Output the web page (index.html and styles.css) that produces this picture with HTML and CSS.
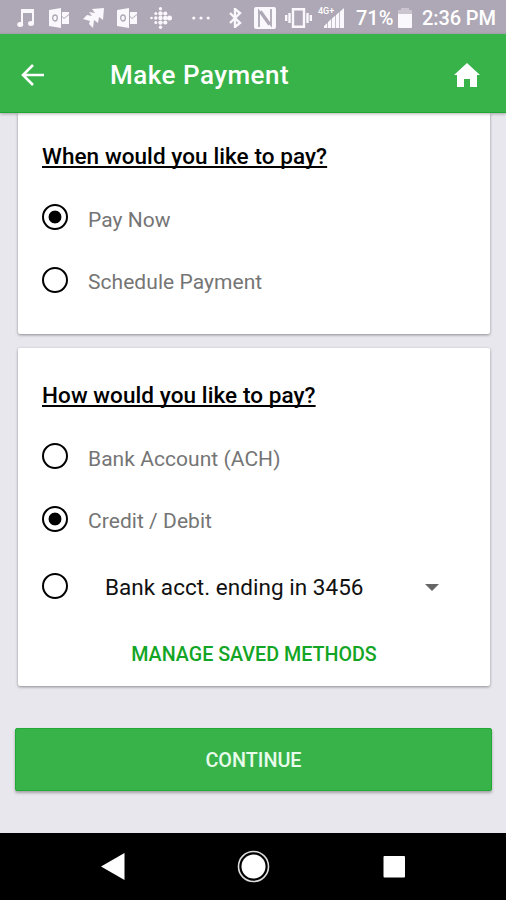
FILE: index.html
```html
<!DOCTYPE html>
<html lang="en">
<head>
  <meta charset="UTF-8">
  <title>Make Payment</title>
  <link rel="stylesheet" href="styles.css">
</head>
<body>
  <div class="status">
    <svg class="music" width="18" height="20" viewBox="0 0 18 20">
      <path d="M4 1h13v14h-2V5H6v12H4z"/>
      <ellipse cx="3.2" cy="16.5" rx="3" ry="2.5"/>
      <ellipse cx="14" cy="15.5" rx="3" ry="2.5"/>
    </svg>
    <svg class="mail" width="21" height="20" viewBox="0 0 21 20">
      <path d="M0 2l12-2v20L0 18z"/>
      <ellipse class="letter" cx="6" cy="10" rx="2.300" ry="3"/>
      <path d="M13 4h7v2l-5 4-2-2zM13 9l2 2 5-4v9h-7z"/>
    </svg>
    <svg class="send" width="21" height="20" viewBox="0 0 21 20">
      <path d="M9 1l12-1-1 12-4-3-1 6-4-3-1 8-4-4 1-3-7-2 4-4 5 1-3-4 6 1z"/>
    </svg>
    <svg class="mail" width="21" height="20" viewBox="0 0 21 20">
      <path d="M0 2l12-2v20L0 18z"/>
      <ellipse class="letter" cx="6" cy="10" rx="2.300" ry="3"/>
      <path d="M13 4h7v2l-5 4-2-2zM13 9l2 2 5-4v9h-7z"/>
    </svg>
    <svg class="fit" width="22" height="22" viewBox="0 0 22 22">
      <circle cx="1.500" cy="11" r="1.300"/>
      <circle cx="5.800" cy="6.500" r="1.500"/><circle cx="5.800" cy="11" r="1.800"/><circle cx="5.800" cy="15.500" r="1.500"/>
      <circle cx="10.500" cy="1.800" r="1.700"/><circle cx="10.500" cy="6.400" r="2.200"/><circle cx="10.500" cy="11" r="2.200"/><circle cx="10.500" cy="15.600" r="2.200"/><circle cx="10.500" cy="20.200" r="1.700"/>
      <circle cx="15.300" cy="6.500" r="2.100"/><circle cx="15.300" cy="11" r="2.300"/><circle cx="15.300" cy="15.500" r="2.100"/>
      <circle cx="19.500" cy="11" r="2.500"/>
    </svg>
    <svg class="dots" width="18" height="4" viewBox="0 0 18 4">
      <circle cx="1.800" cy="2" r="1.600"/><circle cx="9" cy="2" r="1.600"/><circle cx="16.200" cy="2" r="1.600"/>
    </svg>
    <svg class="bluetooth" width="13" height="20" viewBox="0 0 13 20">
      <path class="line" d="M1 5l10 10-5 4V1l5 4L1 15"/>
    </svg>
    <svg class="nfc" width="22" height="22" viewBox="0 0 22 22">
      <rect width="22" height="22" rx="2"/>
      <path class="cut" d="M5 20V4l10 14M17 2v16L7 4"/>
    </svg>
    <svg class="vibrate" width="27" height="20" viewBox="0 0 27 20">
      <path class="line" d="M8 1.200h11v17.600H8z"/>
      <path class="line" d="M4.500 5v10M22.500 5v10M1.200 7v6M25.800 7v6"/>
    </svg>
    <div class="signal">
      <span>4G+</span>
      <svg width="20" height="20" viewBox="0 0 20 20">
        <path d="M0 20v-2l3.300-3v5zM4 20v-6l3.300-3v9zM8 20v-9.500l3.300-3V20zM12 20V7l3.300-3v16zM16 20V3.500L20 0v20z"/>
      </svg>
    </div>
    <span class="percent">71%</span>
    <svg class="battery" width="14" height="20" viewBox="0 0 14 20">
      <path class="used" d="M0 7V3q0-1 1-1h2V0h8v2h2q1 0 1 1v4z"/>
      <path d="M0 6h14v13q0 1-1 1H1q-1 0-1-1z"/>
    </svg>
    <span class="time">2:36 PM</span>
  </div>
  <div class="header">
    <svg class="back" width="24" height="24" viewBox="0 0 24 24">
      <path d="M12 2L2 12l10 10M2 12h21"/>
    </svg>
    <h1>Make Payment</h1>
    <svg class="home" width="26" height="24" viewBox="0 0 26 24">
      <path d="M13 0l13 12h-3v12h-7v-8h-6v8H3V12H0z"/>
    </svg>
  </div>
  <div class="content">
    <div class="card when">
      <h2>When would you like to pay?</h2>
      <div class="option"><span class="radio on"></span><span class="label">Pay Now</span></div>
      <div class="option"><span class="radio"></span><span class="label">Schedule Payment</span></div>
    </div>
    <div class="card how">
      <h2>How would you like to pay?</h2>
      <div class="option"><span class="radio"></span><span class="label">Bank Account (ACH)</span></div>
      <div class="option"><span class="radio on"></span><span class="label">Credit / Debit</span></div>
      <div class="option saved">
        <span class="radio"></span>
        <span class="select">Bank acct. ending in 3456</span>
        <span class="caret"></span>
      </div>
      <div class="manage">MANAGE SAVED METHODS</div>
    </div>
    <div class="continue">CONTINUE</div>
  </div>
  <div class="nav">
    <svg width="506" height="67" viewBox="0 0 506 67">
      <path d="M101 33.500L124.500 20v27z"/>
      <circle class="ring" cx="253.500" cy="33.500" r="15"/>
      <circle cx="253.500" cy="33.500" r="12"/>
      <rect x="383.500" y="23" width="21.500" height="21.500" rx="1"/>
    </svg>
  </div>
</body>
</html>
```
FILE: styles.css
```css
* {
  padding: 0;
  margin: 0;
  box-sizing: border-box;
}
body {
  width: 506px;
  height: 900px;
  overflow: hidden;
  display: flex;
  flex-direction: column;
  background: #e8e7ee;
  font-family: Roboto, "Liberation Sans", sans-serif;
}
svg {
  display: block;
  flex: none;
  fill: #fff;
}
.status {
  height: 34px;
  flex: none;
  display: flex;
  align-items: center;
  padding-top: 1px;
  padding-left: 17px;
  background: #aea7b5;
  color: #fff;
  font-size: 20px;
  font-weight: 500;
  white-space: nowrap;
}
.status svg {
  fill: #faf8fc;
}
.status .line {
  fill: none;
  stroke: #faf8fc;
  stroke-width: 2.4;
}
.status .cut {
  fill: none;
  stroke: #aea7b5;
  stroke-width: 1.8;
}
.status .letter {
  fill: none;
  stroke: #aea7b5;
  stroke-width: 1.3;
}
.mail {
  margin-left: 14px;
}
.send {
  margin-left: 13px;
}
.send + .mail {
  margin-left: 13px;
}
.fit {
  margin-left: 12px;
}
.dots {
  margin-left: 20px;
}
.bluetooth {
  margin-left: 19px;
}
.nfc {
  margin-left: 12px;
}
.vibrate {
  margin-left: 9px;
}
.signal {
  width: 26px;
  height: 21px;
  margin-left: 6px;
  display: grid;
}
.signal span {
  grid-area: 1 / 1;
  font-size: 9px;
  line-height: 8px;
}
.signal svg {
  grid-area: 1 / 1;
  align-self: end;
  justify-self: end;
}
.percent {
  width: 42px;
  margin-left: 12px;
  line-height: 33px;
  padding-top: 2px;
}
.battery .used {
  fill: #cbc5d0;
}
.time {
  margin-left: 10px;
  line-height: 33px;
  padding-top: 2px;
  letter-spacing: -0.1px;
}
.header {
  height: 79px;
  flex: none;
  display: flex;
  align-items: center;
  padding: 4px 26px 0 21px;
  background: #37b34a;
  border-bottom: 1px solid #1ea632;
  box-shadow: 0 1px 3px rgba(0, 0, 0, 0.3);
  position: relative;
  color: #fff;
}
.back path {
  fill: none;
  stroke: #fff;
  stroke-width: 2.6;
}
h1 {
  flex: 1;
  margin-left: 65px;
  font-size: 26px;
  font-weight: 500;
  letter-spacing: 0.5px;
}
.content {
  flex: 1;
  display: flex;
  flex-direction: column;
  padding: 0 14px 0 15px;
}
.card {
  width: 472px;
  margin-left: 3px;
  padding: 0 24px;
  background: #fff;
  border-radius: 0 0 2px 2px;
  box-shadow: 0 1px 3px rgba(0, 0, 0, 0.4);
}
.when {
  height: 221px;
  padding-top: 28px;
}
.how {
  height: 338px;
  margin-top: 14px;
  padding-top: 32px;
  border-radius: 2px;
}
h2 {
  height: 30px;
  margin-bottom: 15px;
  line-height: 30px;
  font-size: 22.5px;
  font-weight: 500;
  letter-spacing: 0.08px;
  color: #000;
  text-decoration: underline;
  text-decoration-thickness: 2px;
  text-underline-offset: 2px;
  text-decoration-skip-ink: none;
  white-space: nowrap;
}
.option {
  height: 62.5px;
  display: flex;
  align-items: center;
  font-size: 21px;
  color: #757575;
  white-space: nowrap;
}
.radio {
  width: 26px;
  height: 26px;
  flex: none;
  border: 2.5px solid #000;
  border-radius: 50%;
}
.on {
  background: radial-gradient(circle, #000 6px, #fff 6.8px);
}
.label {
  margin-left: 20px;
  padding-top: 5px;
  letter-spacing: 0.05px;
}
.saved {
  height: 72px;
  color: #111;
}
.select {
  width: 320px;
  margin-left: 37px;
  padding-top: 2px;
  font-size: 22.5px;
  letter-spacing: 0.04px;
}
.caret {
  margin-top: 2px;
  border: 7px solid transparent;
  border-top-color: #666;
  border-bottom: 0;
}
.manage {
  line-height: 66px;
  text-align: center;
  font-size: 19.7px;
  font-weight: 500;
  color: #13a525;
}
.continue {
  height: 63px;
  margin-top: 42px;
  line-height: 64px;
  background: #37b34a;
  border: 1px solid #22a936;
  border-radius: 2px;
  box-shadow: 0 2px 3px rgba(0, 0, 0, 0.3);
  text-align: center;
  font-size: 19.8px;
  font-weight: 500;
  color: #e8fbea;
}
.nav {
  height: 67px;
  flex: none;
  background: #000;
}
.ring {
  fill: none;
  stroke: #ddd;
  stroke-width: 1.6;
}
```
